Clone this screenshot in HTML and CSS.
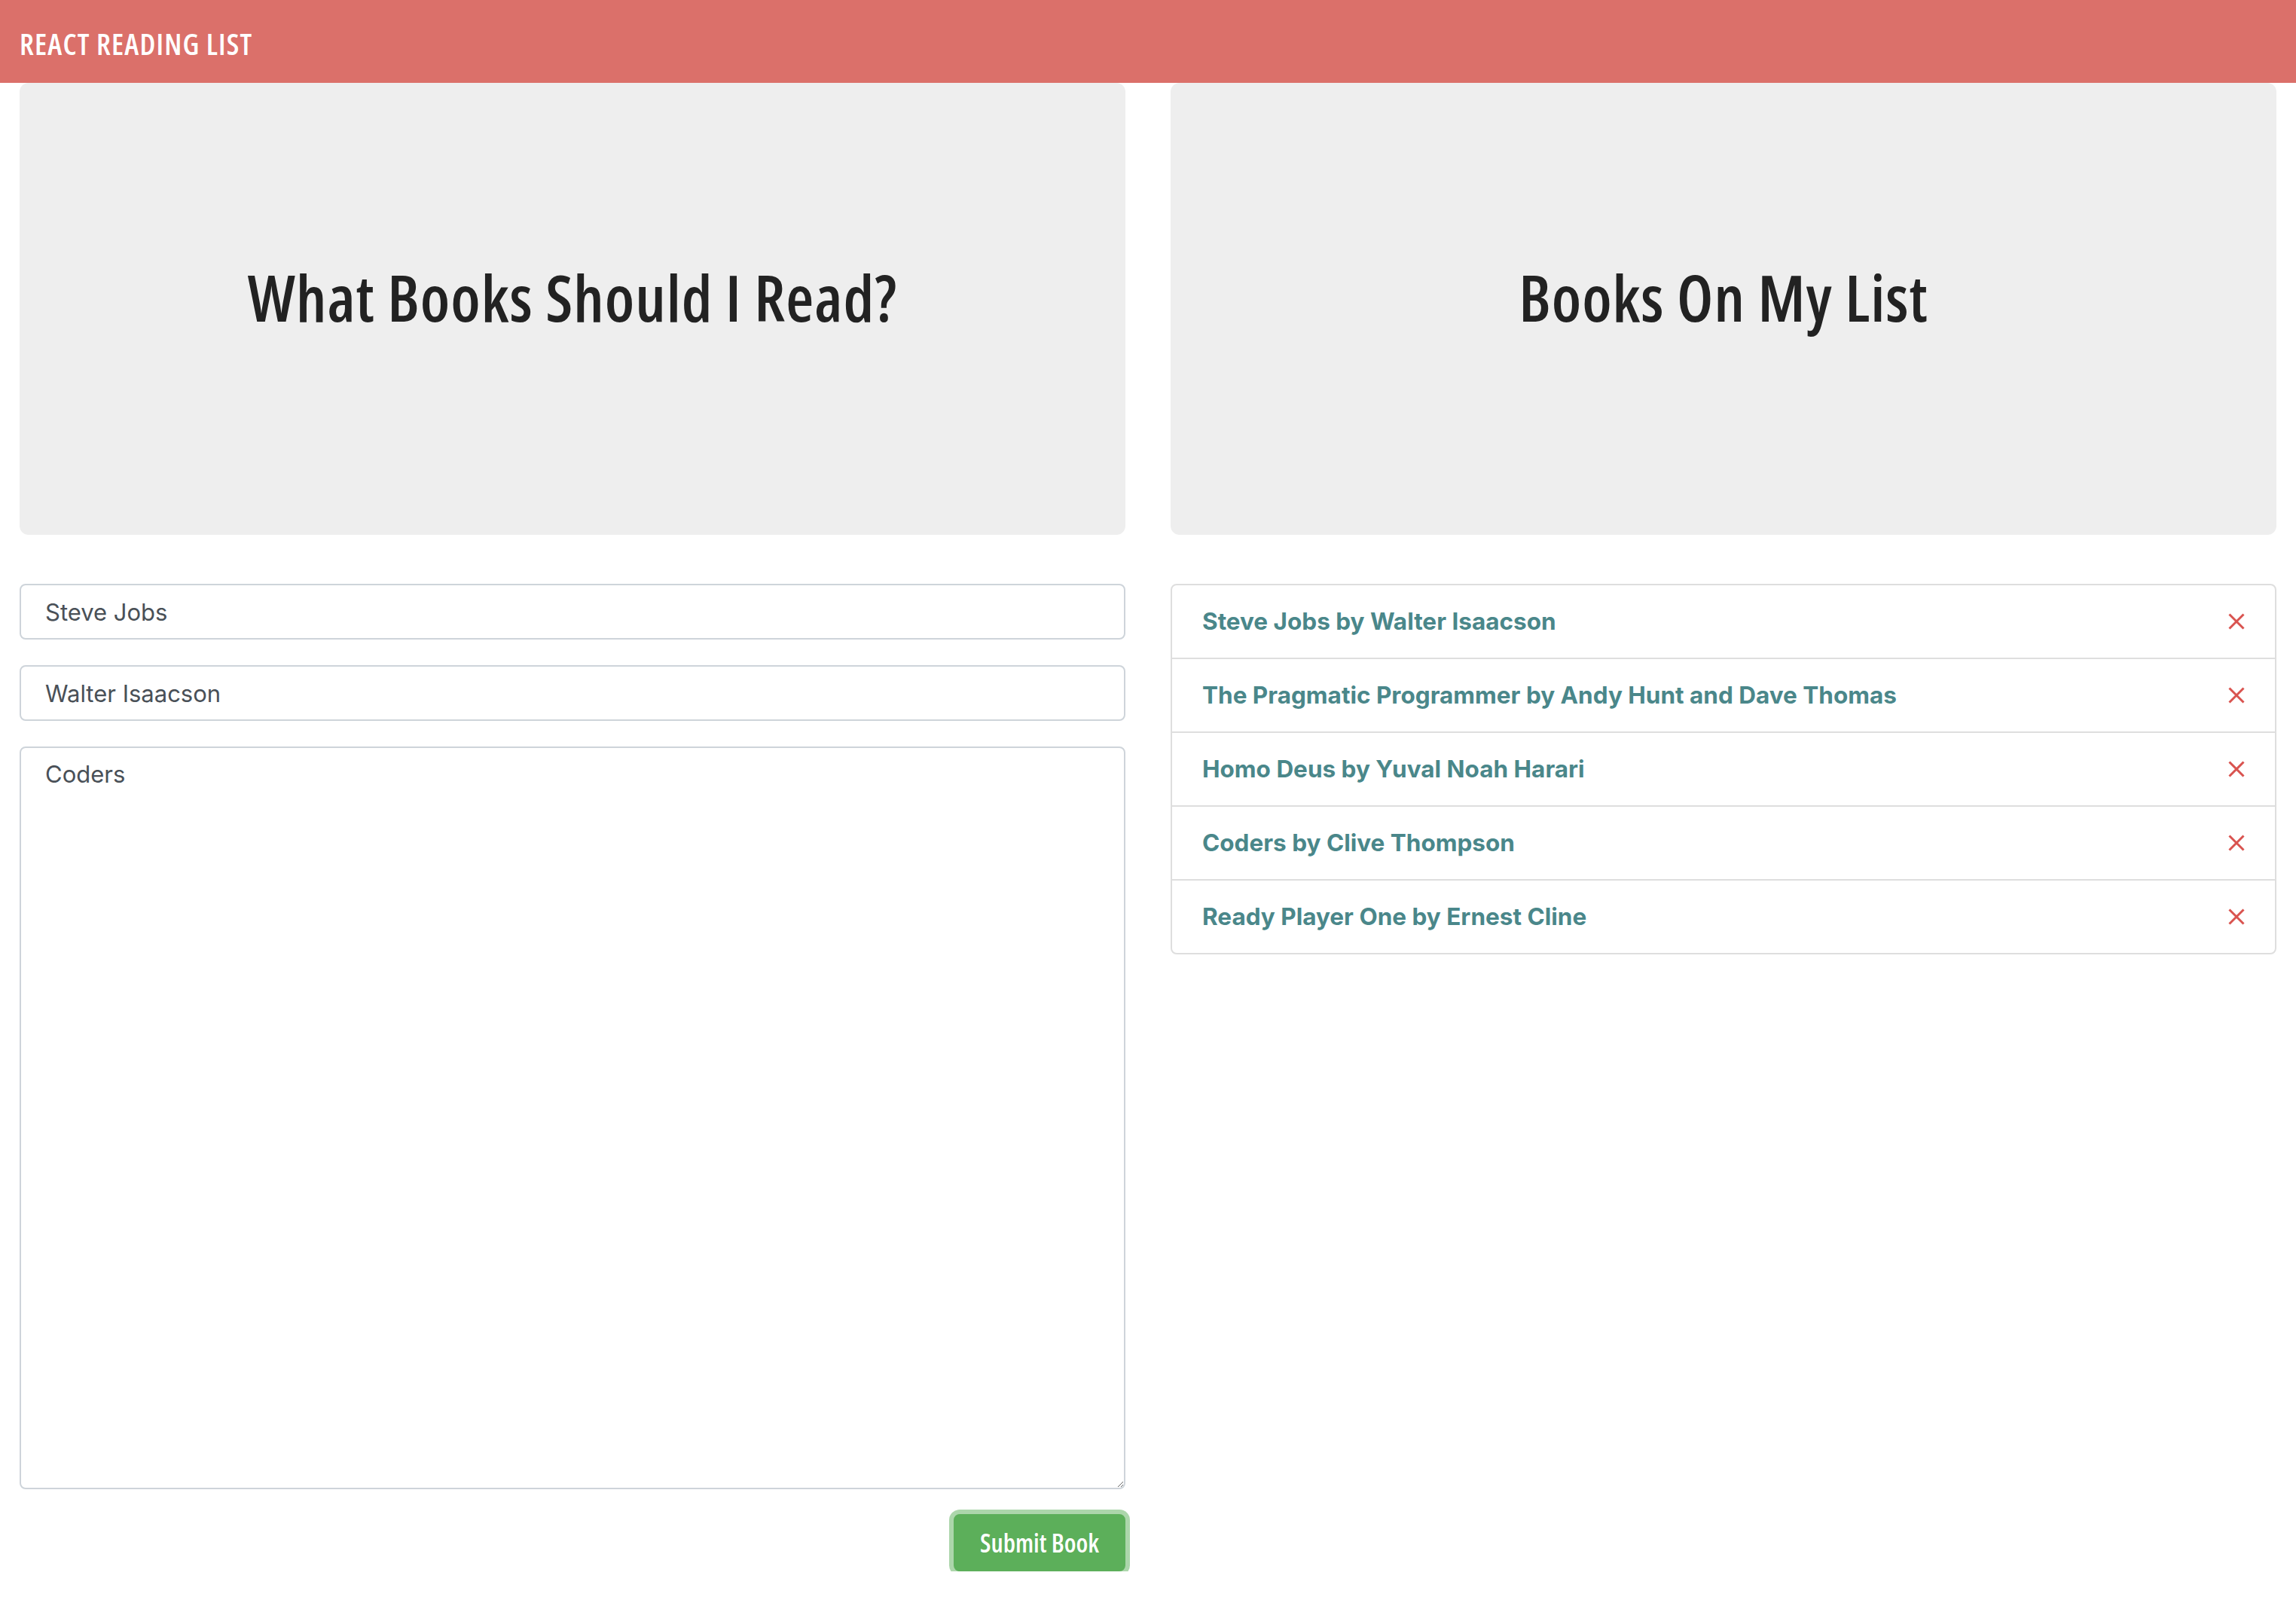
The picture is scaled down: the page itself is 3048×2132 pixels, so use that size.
FILE: index.html
```html
<!DOCTYPE html>
<html lang="en">
<head>
<meta charset="utf-8">
<title>React Reading List</title>
<link rel="stylesheet" href="styles.css">
</head>
<body>
<nav class="navbar"><span class="brand">REACT READING LIST</span></nav>
<main class="content">
  <section class="col">
    <div class="jumbotron"><h1 class="title">What Books Should I Read?</h1></div>
    <form class="book-form">
      <input class="field" type="text" value="Steve Jobs">
      <input class="field" type="text" value="Walter Isaacson">
      <textarea class="field area">Coders</textarea>
      <div class="actions"><button type="button" class="btn-submit">Submit Book</button></div>
    </form>
  </section>
  <section class="col">
    <div class="jumbotron"><h1 class="title">Books On My List</h1></div>
    <ul class="list">
      <li class="item"><span class="book">Steve Jobs by Walter Isaacson</span><svg class="x" viewBox="0 0 22 22"><path d="M1.5 1.5 L20.5 20.5 M20.5 1.5 L1.5 20.5"/></svg></li>
      <li class="item"><span class="book">The Pragmatic Programmer by Andy Hunt and Dave Thomas</span><svg class="x" viewBox="0 0 22 22"><path d="M1.5 1.5 L20.5 20.5 M20.5 1.5 L1.5 20.5"/></svg></li>
      <li class="item"><span class="book">Homo Deus by Yuval Noah Harari</span><svg class="x" viewBox="0 0 22 22"><path d="M1.5 1.5 L20.5 20.5 M20.5 1.5 L1.5 20.5"/></svg></li>
      <li class="item"><span class="book">Coders by Clive Thompson</span><svg class="x" viewBox="0 0 22 22"><path d="M1.5 1.5 L20.5 20.5 M20.5 1.5 L1.5 20.5"/></svg></li>
      <li class="item"><span class="book">Ready Player One by Ernest Cline</span><svg class="x" viewBox="0 0 22 22"><path d="M1.5 1.5 L20.5 20.5 M20.5 1.5 L1.5 20.5"/></svg></li>
    </ul>
  </section>
</main>
</body>
</html>
```
FILE: styles.css
```css
* { box-sizing: border-box; }
html, body { margin: 0; padding: 0; background: #fff; }
body { font-family: Inter, "Noto Sans", sans-serif; color: #212529; }

.navbar {
  height: 110px;
  background: #db706a;
  padding: 36px 26px 0;
}
.brand {
  display: block;
  font-family: "Open Sans", "Liberation Sans", sans-serif;
  font-stretch: 75%;
  font-weight: 600;
  font-size: 39px;
  letter-spacing: 1.2px;
  line-height: 43px;
  color: #fff;
}

.content {
  display: grid;
  grid-template-columns: 1fr 1fr;
  column-gap: 60px;
  padding: 0 26px;
}
.col { display: flex; flex-direction: column; min-width: 0; }

.jumbotron {
  height: 600px;
  background: #eeeeee;
  border-radius: 12px;
  padding-top: 233px;
  margin-bottom: 65px;
}
.title {
  margin: 0;
  text-align: center;
  font-family: "Open Sans", "Liberation Sans", sans-serif;
  font-stretch: 75%;
  font-weight: 600;
  font-size: 85px;
  letter-spacing: 1px;
  line-height: 1.2;
  color: #222;
}

.book-form { display: flex; flex-direction: column; }
.field {
  display: block;
  width: 100%;
  height: 74px;
  margin: 0 0 34px;
  padding: 11px 32px;
  font-family: Inter, "Noto Sans", sans-serif;
  font-size: 31px;
  line-height: 48px;
  color: #495057;
  background: #fff;
  border: 2px solid #ced4da;
  border-radius: 8px;
  outline: none;
}
.area { height: 986px; margin-bottom: 33px; resize: vertical; }

.actions { display: flex; justify-content: flex-end; }
.btn-submit {
  width: 228px;
  height: 76px;
  padding: 0;
  background: #5caf5a;
  color: #fff;
  border: 2px solid #5caf5a;
  border-radius: 8px;
  box-shadow: 0 0 0 6px #acd6ab;
  font-family: "Open Sans", "Liberation Sans", sans-serif;
  font-stretch: 75%;
  font-weight: 600;
  font-size: 34px;
  line-height: 40px;
}

.list {
  list-style: none;
  margin: 0;
  padding: 0;
  border: 2px solid #dedede;
  border-radius: 8px;
}
.item {
  display: flex;
  align-items: center;
  justify-content: space-between;
  height: 98px;
  padding: 0 40px;
  border-top: 2px solid #dedede;
}
.item:first-child { border-top: 0; height: 96px; }
.book {
  font-family: Inter, "Noto Sans", sans-serif;
  font-weight: 700;
  font-size: 31.5px;
  line-height: 48px;
  color: #4a878a;
}
.x {
  width: 22px;
  height: 22px;
  flex: none;
  fill: none;
  stroke: #d9534f;
  stroke-width: 3;
}
```
